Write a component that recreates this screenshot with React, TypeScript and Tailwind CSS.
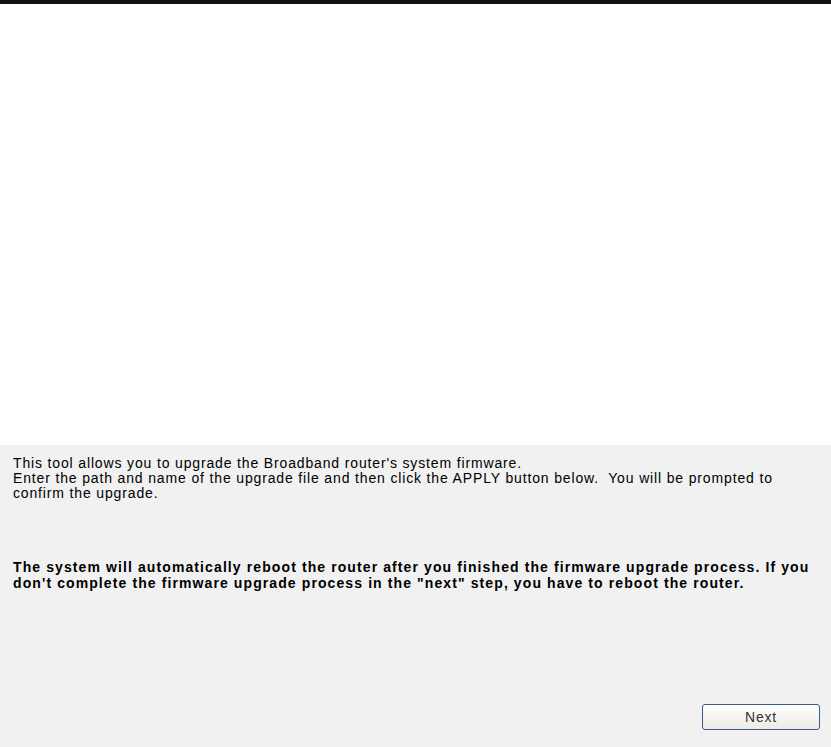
export default function App() {
  return (
    <div className="flex h-[747px] flex-col bg-white font-['Liberation_Sans',Arial,sans-serif] text-black">
      <div className="h-[4px] bg-[#111111]" />
      <div className="h-[441px]" />
      <div className="flex flex-1 flex-col bg-[#f0f1f0] pl-[13px] pr-[11px] pt-[11px]">
        <p className="whitespace-nowrap text-[14px] leading-[15px] tracking-[0.85px]">
          This tool allows you to upgrade the Broadband router's system firmware.
          <br />
          Enter the path and name of the upgrade file and then click the APPLY button below.&nbsp; You will be prompted to
          <br />
          confirm the upgrade.
        </p>
        <p className="mt-[58px] whitespace-nowrap text-[14px] font-bold leading-[16px] tracking-[1.1px]">
          The system will automatically reboot the router after you finished the firmware upgrade process. If you
          <br />
          don't complete the firmware upgrade process in the "next" step, you have to reboot the router.
        </p>
        <div className="mt-auto mb-[17px] flex justify-end">
          <button className="h-[26px] w-[118px] rounded-[3px] border border-[#3c5a8c] bg-gradient-to-b from-white to-[#ecebe4] text-[14px] tracking-[0.8px] text-[#333]">
            Next
          </button>
        </div>
      </div>
    </div>
  );
}
